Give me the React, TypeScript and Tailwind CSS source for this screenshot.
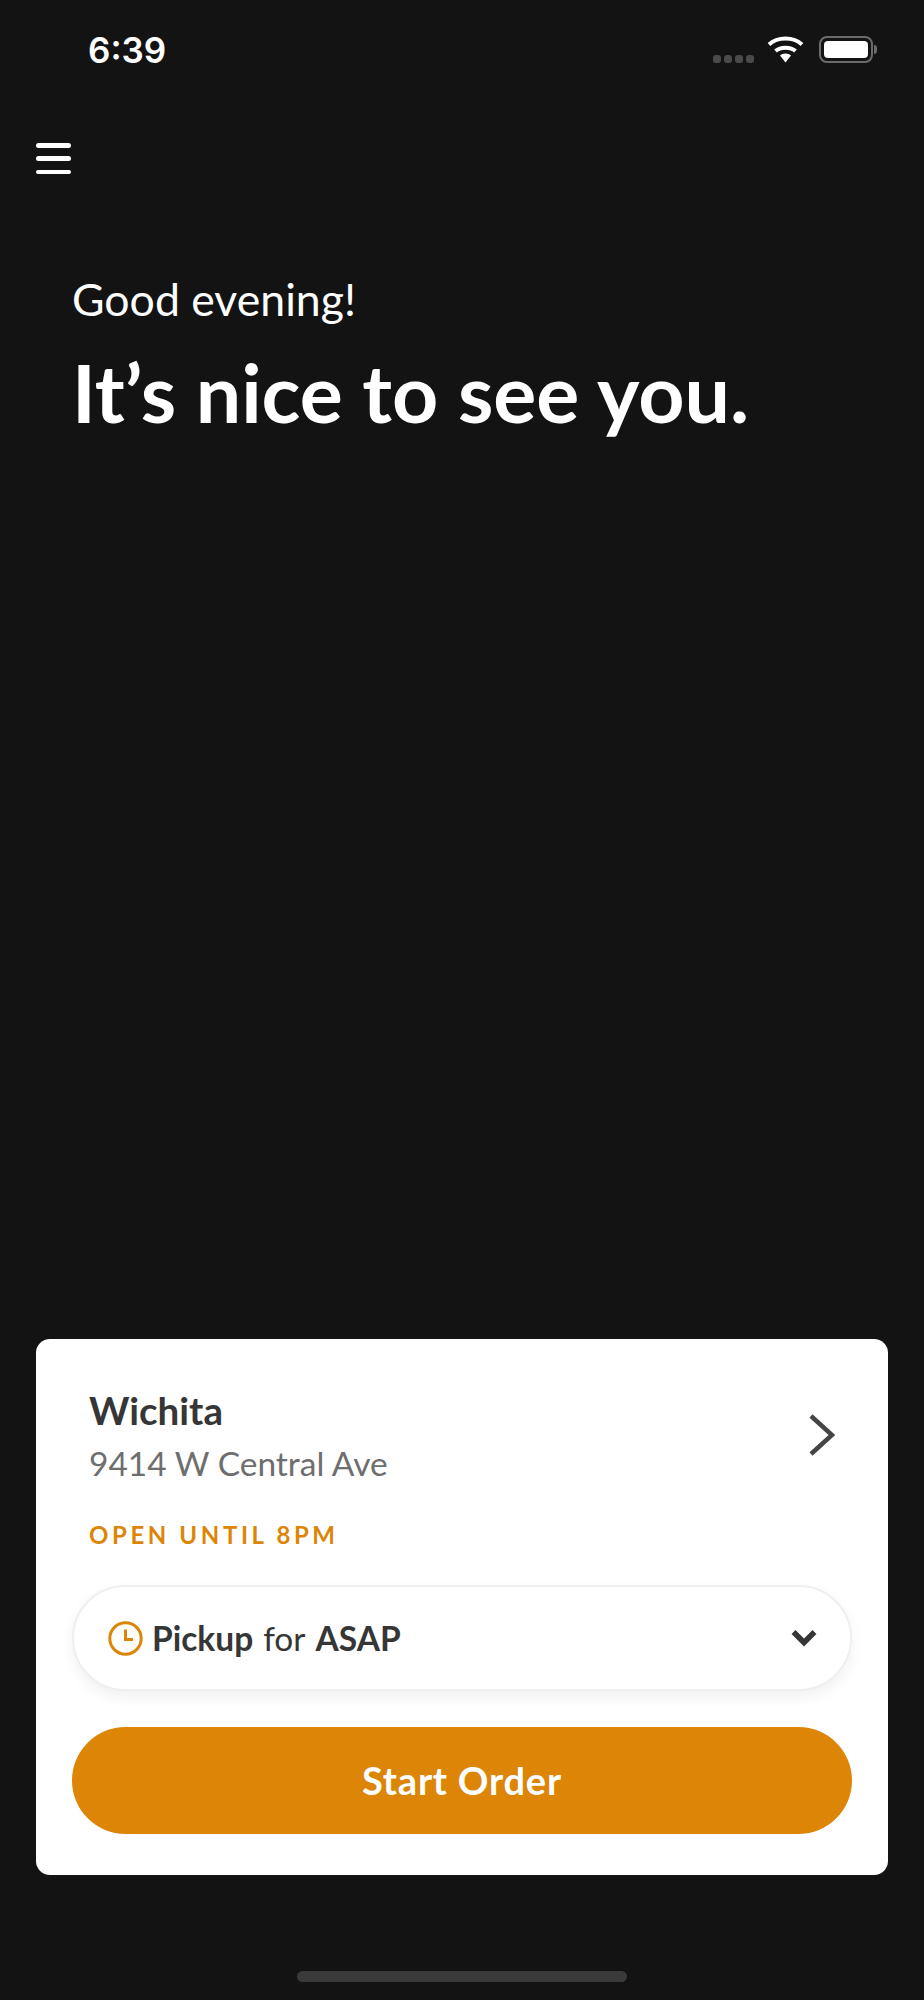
export default function App() {
  return (
    <div className="relative h-[2000px] w-[924px] bg-[#141314] flex flex-col font-['Lato',sans-serif] overflow-hidden">
      <div className="h-[100px] shrink-0 flex items-start justify-between pl-[88px] pr-[47px] pt-[28px]">
        <span className="text-[35px] leading-[44px] font-semibold text-white font-['Inter',sans-serif]">6:39</span>
        <div className="flex items-end gap-[13px] pt-[8px]">
          <div className="flex gap-[3px]">
            <span className="w-[8px] h-[8px] rounded-[3px] bg-[#4a4a4a]" />
            <span className="w-[8px] h-[8px] rounded-[3px] bg-[#4a4a4a]" />
            <span className="w-[8px] h-[8px] rounded-[3px] bg-[#4a4a4a]" />
            <span className="w-[8px] h-[8px] rounded-[3px] bg-[#4a4a4a]" />
          </div>
          <svg width="37" height="27" viewBox="0 0 37 27" fill="none" className="block">
            <path d="M2 8.5C10.5 0.5 26.5 0.5 35 8.5" stroke="#fff" strokeWidth="4" strokeLinecap="butt" />
            <path d="M8.5 15C13.5 10.5 23.5 10.5 28.5 15" stroke="#fff" strokeWidth="4" />
            <path d="M18.5 17.5C16 17.5 14.2 18.3 13 19.5L18.5 26.5L24 19.5C22.8 18.3 21 17.5 18.5 17.5Z" fill="#fff" />
          </svg>
          <div className="flex items-center ml-[2px]">
            <div className="w-[54px] h-[27px] rounded-[8px] border-[2px] border-[#6b6b6b] p-[3px]">
              <div className="w-full h-full rounded-[4px] bg-white" />
            </div>
            <div className="w-[3px] h-[9px] ml-[1px] rounded-r-[3px] bg-[#6b6b6b]" />
          </div>
        </div>
      </div>

      <div className="pl-[36px] mt-[43px] flex flex-col gap-[8.9px] w-max">
        <span className="block w-[35px] h-[4.5px] rounded-full bg-white" />
        <span className="block w-[35px] h-[4.5px] rounded-full bg-white" />
        <span className="block w-[35px] h-[4.5px] rounded-full bg-white" />
      </div>

      <div className="pl-[72px] mt-[98px] text-white">
        <div className="text-[44.6px] leading-[54px]">Good evening!</div>
        <div className="text-[80.6px] leading-[96px] font-bold mt-[18px]">It’s nice to see you.</div>
      </div>

      <div className="mt-auto mx-[36px] mb-[125px] h-[536px] bg-white rounded-[14px] px-[36px] pt-[47px] flex flex-col">
        <div className="flex items-center justify-between pl-[17px] pr-[17px]">
          <div>
            <div className="text-[38.5px] leading-[48px] font-bold text-[#363636]">Wichita</div>
            <div className="text-[33.5px] leading-[42px] text-[#6e6e6e] mt-[8px]">9414 W Central Ave</div>
          </div>
          <svg width="26" height="42" viewBox="0 0 26 42" fill="none">
            <path d="M2 2L23 21L2 40" stroke="#454545" strokeWidth="4.5" />
          </svg>
        </div>
        <div className="pl-[17px] mt-[36px] text-[24px] leading-[30px] font-bold tracking-[3.6px] text-[#dd8506]">OPEN UNTIL 8PM</div>
        <div className="mt-[35px] h-[106px] rounded-full bg-white border-[2px] border-[#efefef] shadow-[0_6px_14px_rgba(0,0,0,0.06)] flex items-center justify-between pl-[34px] pr-[33px]">
          <div className="flex items-center gap-[9px] text-[33.5px] text-[#363636]">
            <svg width="35" height="35" viewBox="0 0 35 35" fill="none">
              <circle cx="17.5" cy="17.5" r="15.7" stroke="#dd8506" strokeWidth="3" />
              <path d="M17.5 8.5V18.5H25" stroke="#dd8506" strokeWidth="3" />
            </svg>
            <span>
              <span className="font-bold">Pickup</span>
              <span className="ml-[10px]">for</span>
              <span className="font-bold ml-[10px]">ASAP</span>
            </span>
          </div>
          <svg width="26" height="18" viewBox="0 0 26 18" fill="none">
            <path d="M2.5 3L13 13.5L23.5 3" stroke="#363636" strokeWidth="5.5" />
          </svg>
        </div>
        <div className="mt-[36px] h-[107px] rounded-full bg-[#dd8506] flex items-center justify-center text-[38px] font-bold tracking-[0.8px] text-white">Start Order</div>
      </div>

      <div className="absolute left-[297px] top-[1971px] w-[330px] h-[11px] rounded-full bg-[#3a3a3a]" />
    </div>
  );
}
